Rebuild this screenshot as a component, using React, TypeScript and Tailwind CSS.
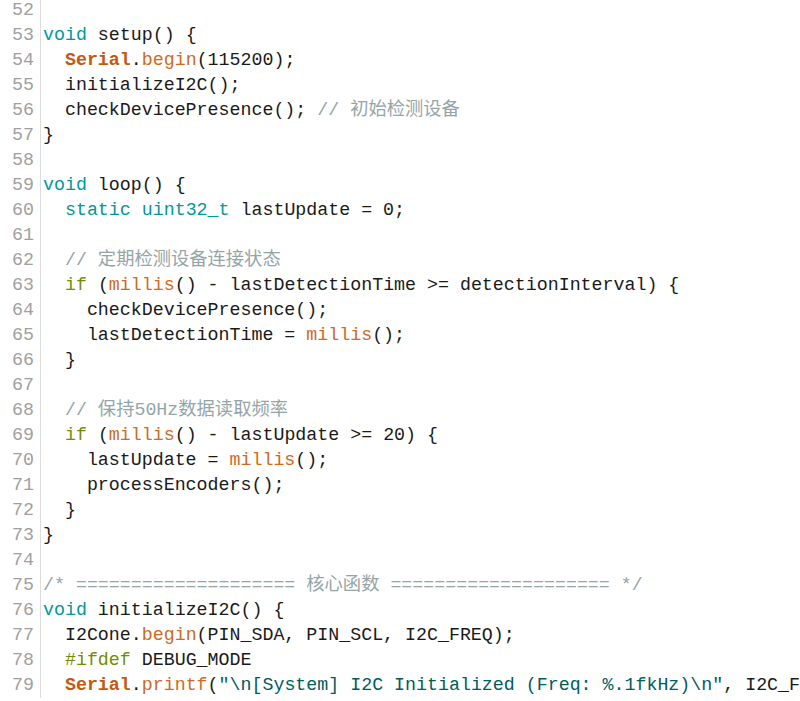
import React from "react";

type Tok = [string, string?];

const C = {
  kw: "text-[#00979C]",
  ctl: "text-[#728E00]",
  ser: "text-[#C4580F] font-bold",
  fn: "text-[#CF6A22]",
  cm: "text-[#95A5A6]",
  str: "text-[#005C5F]",
};

const lines: { n: number; t: Tok[] }[] = [
  { n: 52, t: [] },
  { n: 53, t: [["void", C.kw], [" setup() {"]] },
  { n: 54, t: [["  "], ["Serial", C.ser], ["."], ["begin", C.fn], ["(115200);"]] },
  { n: 55, t: [["  initializeI2C();"]] },
  { n: 56, t: [["  checkDevicePresence(); "], ["// 初始检测设备", C.cm]] },
  { n: 57, t: [["}"]] },
  { n: 58, t: [] },
  { n: 59, t: [["void", C.kw], [" loop() {"]] },
  { n: 60, t: [["  "], ["static", C.kw], [" "], ["uint32_t", C.kw], [" lastUpdate = 0;"]] },
  { n: 61, t: [] },
  { n: 62, t: [["  "], ["// 定期检测设备连接状态", C.cm]] },
  {
    n: 63,
    t: [["  "], ["if", C.ctl], [" ("], ["millis", C.fn], ["() - lastDetectionTime >= detectionInterval) {"]],
  },
  { n: 64, t: [["    checkDevicePresence();"]] },
  { n: 65, t: [["    lastDetectionTime = "], ["millis", C.fn], ["();"]] },
  { n: 66, t: [["  }"]] },
  { n: 67, t: [] },
  { n: 68, t: [["  "], ["// 保持50Hz数据读取频率", C.cm]] },
  { n: 69, t: [["  "], ["if", C.ctl], [" ("], ["millis", C.fn], ["() - lastUpdate >= 20) {"]] },
  { n: 70, t: [["    lastUpdate = "], ["millis", C.fn], ["();"]] },
  { n: 71, t: [["    processEncoders();"]] },
  { n: 72, t: [["  }"]] },
  { n: 73, t: [["}"]] },
  { n: 74, t: [] },
  {
    n: 75,
    t: [["/* ==================== 核心函数 ==================== */", C.cm]],
  },
  { n: 76, t: [["void", C.kw], [" initializeI2C() {"]] },
  { n: 77, t: [["  I2Cone."], ["begin", C.fn], ["(PIN_SDA, PIN_SCL, I2C_FREQ);"]] },
  { n: 78, t: [["  "], ["#ifdef", C.ctl], [" DEBUG_MODE"]] },
  {
    n: 79,
    t: [
      ["  "],
      ["Serial", C.ser],
      ["."],
      ["printf", C.fn],
      ["("],
      ['"\\n[System] I2C Initialized (Freq: %.1fkHz)\\n"', C.str],
      [", I2C_FREQ / 1000.0);"],
    ],
  },
];

export default function App() {
  return (
    <div
      className="w-[800px] h-[701px] overflow-hidden bg-white"
      style={{ fontFamily: '"Liberation Mono", "Noto Sans CJK SC", monospace' }}
    >
      <div className="-mt-[2px] flex flex-col text-[18.3px] leading-[25px] text-[#1a1a1a]">
        {lines.map((l) => (
          <div key={l.n} className="flex h-[25px]">
            <div className="w-[37px] shrink-0 pr-[3px] text-right text-[#a0a0a0]">{l.n}</div>
            <div className="ml-[3px] border-l border-[#dcdcdc] pl-[2px] whitespace-pre">
              {l.t.map((tk, i) => (
                <span key={i} className={tk[1] ?? ""}>
                  {tk[0]}
                </span>
              ))}
            </div>
          </div>
        ))}
      </div>
    </div>
  );
}
